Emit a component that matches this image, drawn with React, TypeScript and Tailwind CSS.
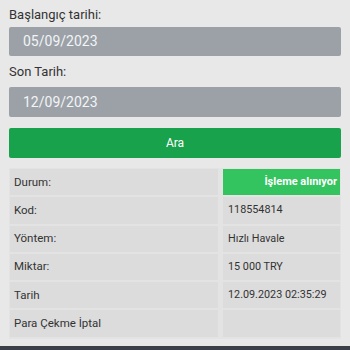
import React from "react";

const rows: { k: string; v: string; green?: boolean }[] = [
  { k: "Durum:", v: "İşleme alınıyor", green: true },
  { k: "Kod:", v: "118554814" },
  { k: "Yöntem:", v: "Hızlı Havale" },
  { k: "Miktar:", v: "15 000 TRY" },
  { k: "Tarih", v: "12.09.2023 02:35:29" },
  { k: "Para Çekme İptal", v: "" },
];

export default function App() {
  return (
    <div
      className="w-[350px] h-[350px] bg-[#e8e8e8] flex flex-col overflow-hidden"
      style={{ fontFamily: "Roboto, 'Noto Sans', sans-serif" }}
    >
      <div className="px-[9px] flex flex-col flex-1">
        <div className="pt-[7px] h-[23px] leading-[16px] text-[13px] text-[#333]">Başlangıç tarihi:</div>
        <div className="mt-[4px] h-[29px] rounded-[2px] bg-[#9ba1a7] flex items-center pl-[14px] text-[14px] text-[#f2f4f6]">
          05/09/2023
        </div>
        <div className="mt-[8px] h-[16px] leading-[16px] text-[13px] text-[#333]">Son Tarih:</div>
        <div className="mt-[7px] h-[30px] rounded-[2px] bg-[#9ba1a7] flex items-center pl-[14px] text-[14px] text-[#f2f4f6]">
          12/09/2023
        </div>
        <div className="mt-[11px] h-[30px] rounded-[2px] bg-[#18a24b] flex items-center justify-center text-[12px] text-white">
          Ara
        </div>
        <div className="mt-[10px] bg-[#e3e3e3] pt-[1px] pb-[2px] pl-[1px] pr-[1px] flex flex-col gap-[2px]">
          {rows.map((r) => (
            <div key={r.k} className="flex h-[26.3px] gap-[5px]">
              <div className="w-[208px] bg-[#dcdcdc] flex items-center pl-[4px] text-[11.5px] text-[#333]">{r.k}</div>
              <div
                className={
                  r.green
                    ? "flex-1 bg-[#33c35f] flex items-center justify-end pr-[3px] text-[11px] font-bold text-white"
                    : "flex-1 bg-[#dcdcdc] flex items-center pl-[5px] text-[10.8px] text-[#333]"
                }
              >
                {r.v}
              </div>
            </div>
          ))}
        </div>
      </div>
      <div className="h-[4px] bg-[#3b4048]" />
    </div>
  );
}
